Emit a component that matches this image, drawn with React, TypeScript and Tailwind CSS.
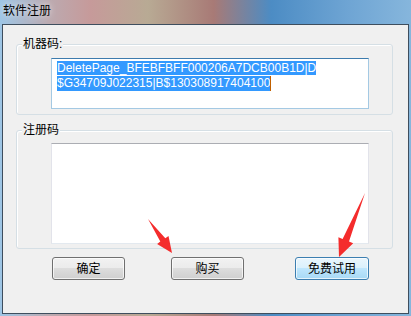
import React from 'react';

const cjk = { fontFamily: '"Liberation Sans", "Noto Sans CJK SC", sans-serif' };

const Btn = ({ label, hot, className }: { label: string; hot?: boolean; className: string }) => (
  <button
    className={`h-[23px] rounded-[3px] border text-[12px] text-black leading-none shadow-[inset_0_0_0_1px_rgba(255,255,255,0.7)] ${
      hot
        ? 'border-[#3c7fb1] bg-[linear-gradient(180deg,#eaf6fd_0%,#d9f0fc_50%,#bee6fd_50%,#a7d9f5_100%)]'
        : 'border-[#707070] bg-[linear-gradient(180deg,#f2f2f2_0%,#ebebeb_50%,#dddddd_50%,#cfcfcf_100%)]'
    } ${className}`}
    style={cjk}
  >
    {label}
  </button>
);

export default function App() {
  return (
    <div
      className="relative w-[411px] h-[316px] overflow-hidden bg-[linear-gradient(90deg,#9ec6e6_0%,#bcaab0_12%,#c69a9a_22%,#b8aa94_36%,#a87a76_52%,#4c8cc4_66%,#6fa5d4_85%,#86b6dc_100%)]"
      style={cjk}
    >
      {/* title */}
      <div className="h-[24px] pl-[3px] pt-[4px] text-[12px] leading-[15px] text-black [text-shadow:0_0_6px_rgba(255,255,255,0.9)]">
        软件注册
      </div>

      {/* client area */}
      <div className="mx-[2px] h-[290px] border border-[#3e4e5e] bg-[#f0f0f0]">
        {/* group 1 */}
        <div className="relative ml-[13px] mt-[19px] w-[377px] h-[71px] rounded-[3px] border border-[#d5dfe5] shadow-[inset_1px_1px_0_#ffffff]">
          <span className="absolute -top-[8px] left-[5px] px-[1px] bg-[#f0f0f0] text-[12px] leading-[14px] text-black">
            机器码:
          </span>
          <div className="ml-[34px] mt-[13px] w-[318px] h-[51px] bg-white border border-[#a4c9e3] border-t-[#3d7bad] pl-[5px] pt-[2px] text-[12px] leading-[15px] text-white">
            <div>
              <span className="bg-[#3399ff]">DeletePage_BFEBFBFF000206A7DCB00B1D|D</span>
            </div>
            <div className="flex">
              <span className="bg-[#3399ff]">$G34709J022315|B$130308917404100</span>
              <span className="w-[1px] bg-[#c06000]" />
            </div>
          </div>
        </div>

        {/* group 2 */}
        <div className="relative ml-[13px] mt-[15px] w-[377px] h-[119px] rounded-[3px] border border-[#d5dfe5] shadow-[inset_1px_1px_0_#ffffff]">
          <span className="absolute -top-[8px] left-[5px] px-[1px] bg-[#f0f0f0] text-[12px] leading-[14px] text-black">
            注册码
          </span>
          <div className="ml-[34px] mt-[12px] w-[318px] h-[101px] bg-white border border-[#e2e3ea] border-t-[#abadb3] border-b-[#e3e9ef]" />
        </div>

        {/* buttons */}
        <div className="flex mt-[8px]">
          <Btn label="确定" className="ml-[49px] w-[73px]" />
          <Btn label="购买" className="ml-[46px] w-[73px]" />
          <Btn label="免费试用" hot className="ml-[51px] w-[74px]" />
        </div>
      </div>

      {/* annotation arrows */}
      <svg className="absolute inset-0 pointer-events-none" width="411" height="316" viewBox="0 0 411 316">
        <polygon
          points="148,219 165.3,238.2 168.5,235.9 172,253 157.1,243.9 160.3,241.6"
          fill="#f42c2c"
        />
        <polygon
          points="365,193 349,241.6 353.2,243.3 339,257 338.4,237.3 342.6,239"
          fill="#f42c2c"
        />
      </svg>
    </div>
  );
}
